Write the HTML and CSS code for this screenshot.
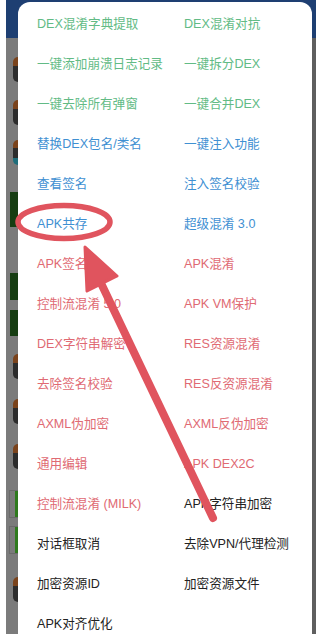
FILE: index.html
```html
<!DOCTYPE html>
<html lang="zh-CN">
<head>
  <meta charset="UTF-8" />
  <meta name="viewport" content="width=device-width, initial-scale=1.0"/>
  <title>功能菜单</title>
  <link rel="stylesheet" href="styles.css">
</head>
<body>
  <div class="phone">
    <div class="app">
      <div class="app-bar"></div>
      <div class="app-list">
        <div class="ico ico-1"></div>
        <div class="ico ico-2"></div>
        <div class="ico ico-3 ico-cyan"></div>
        <div class="blk blk-1"></div>
        <div class="blk blk-2"></div>
        <div class="blk blk-3"></div>
        <div class="ico ico-4"></div>
        <div class="ico ico-5"></div>
        <div class="ico ico-6"></div>
        <div class="up up-1"></div>
        <div class="up up-2"></div>
        <div class="ico ico-7"></div>
      </div>
    </div>

    <div class="dialog">
      <ul class="menu">
        <li class="green">DEX混淆字典提取</li>
        <li class="green">DEX混淆对抗</li>
        <li class="green">一键添加崩溃日志记录</li>
        <li class="green">一键拆分DEX</li>
        <li class="green">一键去除所有弹窗</li>
        <li class="green">一键合并DEX</li>
        <li class="blue">替换DEX包名/类名</li>
        <li class="blue">一键注入功能</li>
        <li class="blue">查看签名</li>
        <li class="blue">注入签名校验</li>
        <li class="blue">APK共存</li>
        <li class="blue">超级混淆 3.0</li>
        <li class="red">APK签名</li>
        <li class="red">APK混淆</li>
        <li class="red">控制流混淆 5.0</li>
        <li class="red">APK VM保护</li>
        <li class="red">DEX字符串解密</li>
        <li class="red">RES资源混淆</li>
        <li class="red">去除签名校验</li>
        <li class="red">RES反资源混淆</li>
        <li class="red">AXML伪加密</li>
        <li class="red">AXML反伪加密</li>
        <li class="red">通用编辑</li>
        <li class="red">APK DEX2C</li>
        <li class="red">控制流混淆 (MILK)</li>
        <li>APK字符串加密</li>
        <li>对话框取消</li>
        <li>去除VPN/代理检测</li>
        <li>加密资源ID</li>
        <li>加密资源文件</li>
        <li>APK对齐优化</li>
      </ul>
    </div>

    <!-- hand-drawn marker over the screenshot -->
    <svg class="marker" width="316" height="634" viewBox="0 0 316 634">
      <ellipse cx="64" cy="222" rx="46" ry="16.5" fill="none" stroke="#e0545e" stroke-width="5.5"/>
      <line x1="213" y1="518" x2="99" y2="279" stroke="#e0545e" stroke-width="8" stroke-linecap="round"/>
      <polygon points="85,247 117,276 87,291" fill="#e0545e" stroke="#e0545e" stroke-width="3" stroke-linejoin="round"/>
    </svg>
  </div>
</body>
</html>
```

FILE: styles.css
```css
body {
  margin: 0;
  padding: 0;
  background: #fff;
  font-family: "Liberation Sans", "Noto Sans CJK SC", sans-serif;
}

.phone {
  position: relative;
  width: 316px;
  height: 634px;
  overflow: hidden;
  background: #fff;
}

.app {
  margin-left: 6px;
  height: 100%;
  background: linear-gradient(to left, #5f5f5f 4px, #7b7b7b 4px);
}

.app-bar {
  height: 38px;
  background: #1e3f72;
}

.app-list {
  display: flex;
  flex-direction: column;
  align-items: flex-start;
}

.ico {
  width: 10px;
  height: 25px;
  margin-left: 7px;
  border-radius: 5px;
  background: linear-gradient(#7a431c 35%, #2c2c2c 35%);
}

.ico-cyan {
  background: linear-gradient(#7a431c 30%, #2c2c2c 30%, #2c2c2c 70%, #1f6d7a 70%);
}

.ico-1 { margin-top: 19px; }
.ico-2 { margin-top: 18px; }
.ico-3 { margin-top: 15px; }
.ico-4 { margin-top: 18px; }
.ico-5 { margin-top: 20px; }
.ico-6 { margin-top: 20px; }
.ico-7 { margin-top: 23px; }

.blk {
  width: 9px;
  margin-left: 4px;
  background: #163d12;
}

.blk-1 { margin-top: 27px; height: 35px; }
.blk-2 { margin-top: 46px; height: 27px; }
.blk-3 { margin-top: 10px; height: 26px; }

.up {
  width: 10px;
  height: 26px;
  margin-left: 3px;
  border: 1px solid #6a6a6a;
  background: linear-gradient(to right, transparent 5px, #2f7a1e 5px);
}

.up-1 { margin-top: 21px; }
.up-2 { margin-top: 8px; }

.dialog {
  position: absolute;
  left: 18px;
  top: 2px;
  right: 4px;
  bottom: -20px;
  background: #fff;
  border-radius: 12px 12px 0 0;
}

.menu {
  display: grid;
  grid-template-columns: 147px 1fr;
  margin: 0;
  padding: 2px 0 0 19px;
  list-style: none;
}

.menu li {
  height: 40px;
  line-height: 40px;
  font-size: 12.6px;
  white-space: nowrap;
  color: #222;
}

.menu .green { color: #62bb85; }
.menu .blue { color: #3f90d2; }
.menu .red { color: #e06a73; }

.marker {
  position: absolute;
  left: 0;
  top: 0;
}
```
